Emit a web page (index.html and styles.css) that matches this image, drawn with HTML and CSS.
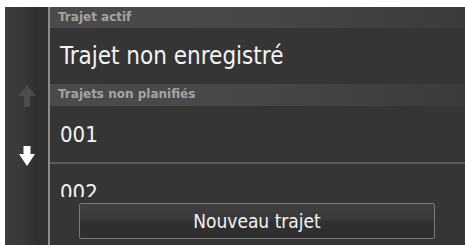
FILE: index.html
```html
<!DOCTYPE html>
<html>
<head>
<meta charset="utf-8">
<link rel="stylesheet" href="styles.css">
</head>
<body>
<div class="screen">
  <div class="sidebar">
    <div class="arrow up">
      <svg width="18" height="22" viewBox="0 0 18 22"><path d="M9 0 L18 11 L12 11 L12 22 L6 22 L6 11 L0 11 Z" fill="#4c4c4c"/></svg>
    </div>
    <div class="arrow down">
      <svg width="16" height="20" viewBox="0 0 16 20"><path d="M4.5 0 L11.5 0 L11.5 8 L16 8 L8 20 L0 8 L4.5 8 Z" fill="#ffffff"/></svg>
    </div>
  </div>
  <div class="main">
    <div class="head">Trajet actif</div>
    <div class="row big">Trajet non enregistré</div>
    <div class="head second">Trajets non planifiés</div>
    <div class="list">
      <div class="row item sep">001</div>
      <div class="row item">002</div>
    </div>
    <div class="footer">
      <div class="button">Nouveau trajet</div>
    </div>
  </div>
</div>
</body>
</html>
```
FILE: styles.css
```css
html, body {
  margin: 0;
  padding: 0;
  background: #ffffff;
}
.screen {
  margin: 7px 0 0 5px;
  width: 460px;
  height: 238px;
  display: flex;
  background: #353535;
  font-family: "DejaVu Sans Condensed", "DejaVu Sans", sans-serif;
  font-stretch: condensed;
  overflow: hidden;
}
.sidebar {
  width: 43px;
  flex: none;
  border-right: 2px solid #8c8c8c;
  background: linear-gradient(to right, #3c3c3c 0%, #393939 40%, #2f2f2f 75%, #333333 100%);
  display: flex;
  flex-direction: column;
  align-items: center;
}
.arrow {
  display: flex;
  justify-content: center;
  margin-left: 1px;
}
.arrow.up {
  margin-top: 78px;
}
.arrow.down {
  margin-top: 39px;
}
.main {
  flex: 1;
  display: flex;
  flex-direction: column;
  min-width: 0;
}
.head {
  height: 21px;
  flex: none;
  box-sizing: border-box;
  padding-left: 8px;
  background: linear-gradient(to right, #4b4b4b 0%, #474747 50%, #3b3b3b 100%);
  color: #a4a4a4;
  font-family: "DejaVu Sans", sans-serif;
  font-stretch: normal;
  font-weight: bold;
  font-size: 12px;
  line-height: 20px;
}
.head.second {
  height: 22px;
}
.row {
  flex: none;
  height: 56px;
  box-sizing: border-box;
  padding-left: 10px;
  color: #f4f4f4;
  display: flex;
  align-items: center;
}
.big {
  font-size: 24px;
}
.list {
  flex: 1;
  overflow: hidden;
  min-height: 0;
}
.item {
  font-size: 22px;
}
.sep {
  height: 58px;
  border-bottom: 2px solid #5a5a5a;
  padding-top: 1px;
}
.footer {
  height: 48px;
  flex: none;
  box-sizing: border-box;
  padding: 6px 30px 6px 29px;
}
.button {
  height: 36px;
  box-sizing: border-box;
  border: 1px solid #7a7a7a;
  border-radius: 2px;
  background: linear-gradient(to bottom, #3f3f3f 0%, #3a3a3a 45%, #303030 55%, #2e2e2e 100%);
  color: #f4f4f4;
  font-size: 19px;
  display: flex;
  align-items: center;
  justify-content: center;
}
```
